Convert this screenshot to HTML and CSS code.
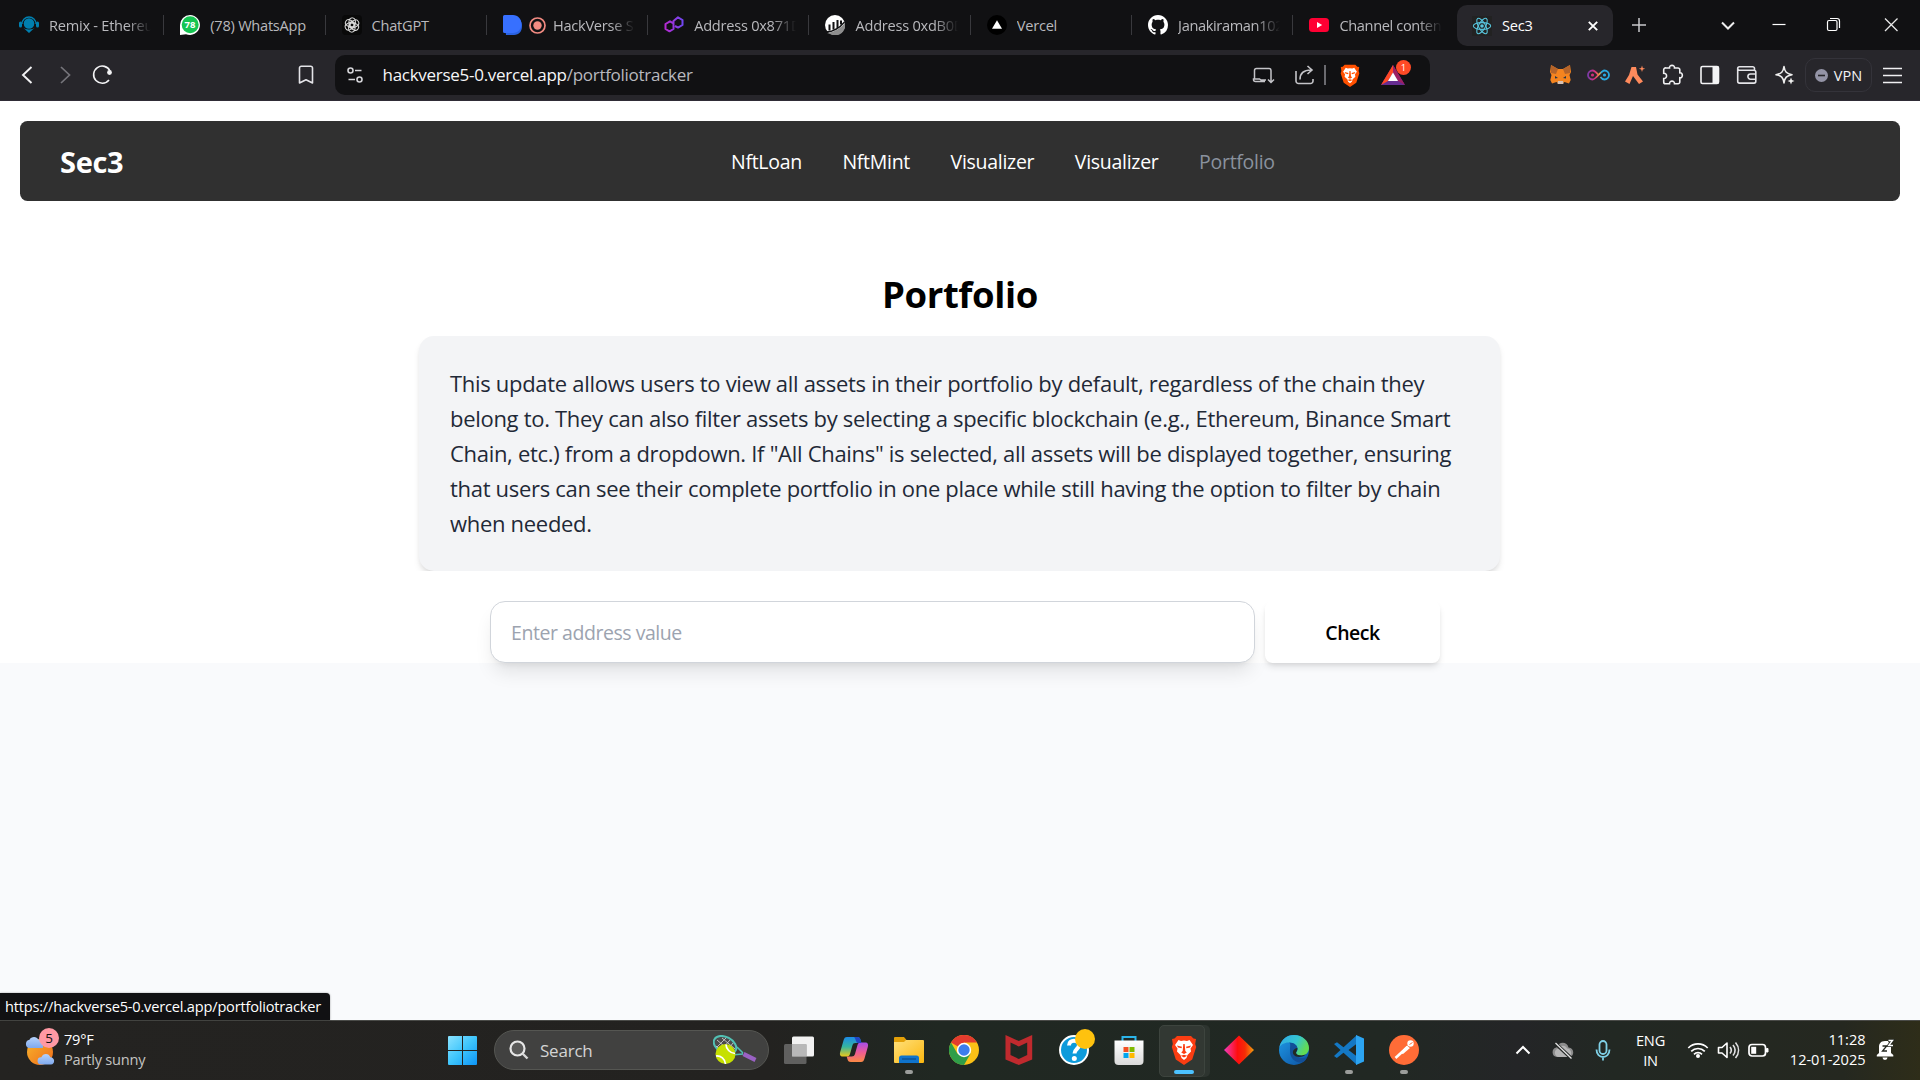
FILE: index.html
```html
<!DOCTYPE html>
<html lang="en">
<head>
<meta charset="utf-8">
<title>Sec3</title>
<link rel="stylesheet" href="styles.css">
</head>
<body>
<svg class="defs" width="0" height="0" aria-hidden="true">
  <defs>
    <symbol id="lion" viewBox="0 0 26 30">
      <path fill="currentColor" d="M6 1h14l2.500 2.500L25 4l-.8 5 1 3-4 12.500L13 30 4.800 24.500.8 12l1-3L1 4l2.500-.5z"/>
      <path fill="#fff" d="M7.500 5 10 6l3-.6L16 6l2.500-1 3.500 5-2.500 3.500.5 3-3.500 3.500-1 3-2.500 2-2.500-2-1-3L6 16.500l.5-3L4 10z"/>
      <path fill="currentColor" d="m6 10.500 5 1.200-.5 1.600-3.500-.8zm14 0-5 1.200.5 1.600 3.500-.8zM12.300 9h1.400l.6 7 1.500 1.500-2.800 1.600-2.800-1.600 1.500-1.500zM9.800 20.800 13 19.800l3.200 1-3.200 1.700z"/>
    </symbol>
    <linearGradient id="gSun" x1="0" y1="0" x2="1" y2="1"><stop offset="0" stop-color="#f7b52c"/><stop offset="1" stop-color="#ef6c1a"/></linearGradient>
    <linearGradient id="gCloud" x1="0" y1="0" x2="0" y2="1"><stop offset="0" stop-color="#b5d2fb"/><stop offset="1" stop-color="#7fa9ee"/></linearGradient>
    <linearGradient id="gWin" x1="0" y1="0" x2="1" y2="1"><stop offset="0" stop-color="#8be3ff"/><stop offset=".5" stop-color="#3ec5fc"/><stop offset="1" stop-color="#0d94f6"/></linearGradient>
    <linearGradient id="gFolder" x1="0" y1="0" x2="1" y2="1"><stop offset="0" stop-color="#ffe07a"/><stop offset="1" stop-color="#fbb70f"/></linearGradient>
    <linearGradient id="gCopA" x1="0" y1="0" x2="0" y2="1"><stop offset="0" stop-color="#1d8be8"/><stop offset=".5" stop-color="#35b5a0"/><stop offset="1" stop-color="#ecc819"/></linearGradient>
    <linearGradient id="gCopB" x1="0" y1="0" x2="0" y2="1"><stop offset="0" stop-color="#a64dea"/><stop offset=".5" stop-color="#ee5b96"/><stop offset="1" stop-color="#fb8a44"/></linearGradient>
    <linearGradient id="gDia" x1="0" y1="0" x2="1" y2="0"><stop offset="0" stop-color="#f03cc0"/><stop offset=".45" stop-color="#fe0e0e"/><stop offset=".7" stop-color="#f52c06"/><stop offset="1" stop-color="#f0a010"/></linearGradient>
    <linearGradient id="gEdgeA" x1="0" y1="0" x2="1" y2=".4"><stop offset="0" stop-color="#2fa8e8"/><stop offset=".6" stop-color="#35c6d0"/><stop offset="1" stop-color="#62dc54"/></linearGradient>
    <linearGradient id="gEdgeB" x1="0" y1="0" x2="1" y2="1"><stop offset="0" stop-color="#1f9be8"/><stop offset="1" stop-color="#0c4f9e"/></linearGradient>
    <linearGradient id="gStore" x1="0" y1="0" x2="0" y2="1"><stop offset="0" stop-color="#fff"/><stop offset="1" stop-color="#dadada"/></linearGradient>
    <linearGradient id="gInf" x1="0" y1="0" x2="1" y2="0"><stop offset="0" stop-color="#7b3aa8"/><stop offset=".35" stop-color="#e0307a"/><stop offset=".55" stop-color="#e8a040"/><stop offset=".65" stop-color="#29a9e1"/><stop offset="1" stop-color="#29a9e1"/></linearGradient>
    <linearGradient id="gPoly" x1="0" y1="0" x2="1" y2="0"><stop offset="0" stop-color="#b52ad0"/><stop offset="1" stop-color="#7146f0"/></linearGradient>
  </defs>
</svg>

<header class="tabstrip">
  <div class="tab">
    <svg class="fav" viewBox="0 0 20 20"><circle cx="10" cy="8.500" r="5.300" fill="#0080b0"/><path d="M3 9a7 7 0 0 1 14 0" fill="none" stroke="#0080b0" stroke-width="1.300"/><rect x="0" y="6.500" width="3" height="6" rx="1.500" fill="#0080b0"/><rect x="17" y="6.500" width="3" height="6" rx="1.500" fill="#0080b0"/><path d="M4 12.500c2 2.500 10 2.500 12 0L10 18z" fill="#0080b0"/></svg>
    <span class="tab-title faded">Remix - Ethereu</span>
  </div>
  <div class="tab">
    <svg class="fav" viewBox="0 0 20 20"><path d="M10 0a10 10 0 1 1-4 19.200L0 20V10A10 10 0 0 1 10 0z" fill="#fff"/><circle cx="10.200" cy="9.800" r="8.500" fill="#16c552"/><text x="10" y="13.300" text-anchor="middle" class="wa-count">78</text></svg>
    <span class="tab-title">(78) WhatsApp</span>
  </div>
  <div class="tab">
    <svg class="fav" viewBox="0 0 20 20"><rect width="20" height="20" rx="4" fill="#090909"/><g fill="none" stroke="#dcdcdc" stroke-width="1"><rect x="7" y="2.800" width="6.400" height="9.200" rx="3.200"/><rect x="7" y="2.800" width="6.400" height="9.200" rx="3.200" transform="rotate(60 10 10)"/><rect x="7" y="2.800" width="6.400" height="9.200" rx="3.200" transform="rotate(120 10 10)"/><rect x="7" y="2.800" width="6.400" height="9.200" rx="3.200" transform="rotate(180 10 10)"/><rect x="7" y="2.800" width="6.400" height="9.200" rx="3.200" transform="rotate(240 10 10)"/><rect x="7" y="2.800" width="6.400" height="9.200" rx="3.200" transform="rotate(300 10 10)"/></g></svg>
    <span class="tab-title">ChatGPT</span>
  </div>
  <div class="tab tab-rec">
    <svg class="fav" viewBox="0 0 20 20"><path d="M1 2h9c5.500 0 9 3.500 9 9s-3 9-8 9H3z" fill="#2a62e0"/><path d="M1.500 0H10c5 0 8.500 4 8.500 9s-3.500 9-8.500 9H1.500A1.500 1.500 0 0 1 0 16.500v-15A1.500 1.500 0 0 1 1.500 0z" fill="#3770ff"/></svg>
    <svg class="rec" viewBox="0 0 17 17"><circle cx="8.500" cy="8.500" r="7.500" fill="none" stroke="#f28b82" stroke-width="1.700"/><circle cx="8.500" cy="8.500" r="4.200" fill="#f28b82"/></svg>
    <span class="tab-title faded">HackVerse S</span>
  </div>
  <div class="tab">
    <svg class="fav" viewBox="0 0 20 20"><path d="M9.500 13.500V8.500L6 6.300 1.500 9v5L5.500 16.300 9.500 14V6L14 2.300 18.500 5v5L14 12.600 11 11" fill="none" stroke="url(#gPoly)" stroke-width="2" stroke-linejoin="round"/></svg>
    <span class="tab-title faded">Address 0x871D</span>
  </div>
  <div class="tab">
    <svg class="fav" viewBox="0 0 20 20"><circle cx="10" cy="10" r="10" fill="#fff"/><path d="M2 18c8-1 14-5 18-10v4a10 10 0 0 1-15 7z" fill="#8d8d8d"/><path d="M4.500 9.500v6M8.500 7v7.500M12.500 5v8M16 5.500v4" stroke="#111113" stroke-width="2"/><path d="M1.500 17C9 16.500 15 12.500 19.500 7" fill="none" stroke="#111113" stroke-width="1.300"/></svg>
    <span class="tab-title faded">Address 0xdB0D</span>
  </div>
  <div class="tab">
    <svg class="fav" viewBox="0 0 20 20"><circle cx="10" cy="10" r="10" fill="#000"/><path d="m10 5.200 5 8.600H5z" fill="#fff"/></svg>
    <span class="tab-title">Vercel</span>
  </div>
  <div class="tab">
    <svg class="fav" viewBox="0 0 16 16"><path fill="#fff" d="M8 0C3.580 0 0 3.580 0 8c0 3.540 2.290 6.530 5.470 7.590.4.070.55-.17.55-.38 0-.19-.01-.82-.01-1.490-2.010.37-2.530-.49-2.690-.94-.09-.23-.48-.94-.82-1.130-.28-.15-.68-.52-.01-.53.63-.01 1.080.58 1.230.82.72 1.210 1.870.87 2.330.66.070-.52.28-.87.51-1.070-1.780-.2-3.640-.89-3.640-3.950 0-.87.31-1.590.82-2.150-.08-.2-.36-1.020.08-2.120 0 0 .67-.21 2.200.82.64-.18 1.320-.27 2-.27s1.360.09 2 .27c1.530-1.040 2.200-.82 2.200-.82.44 1.100.16 1.920.08 2.120.51.56.82 1.270.82 2.150 0 3.070-1.870 3.750-3.650 3.950.29.25.54.73.54 1.480 0 1.070-.01 1.930-.01 2.200 0 .21.15.46.55.38A8.010 8.010 0 0 0 16 8c0-4.420-3.580-8-8-8z"/></svg>
    <span class="tab-title tight faded">Janakiraman102</span>
  </div>
  <div class="tab">
    <svg class="fav" viewBox="0 0 20 20"><rect y="3" width="20" height="14" rx="3.500" fill="#ff0033"/><path d="m8 7 5.200 3L8 13z" fill="#fff"/></svg>
    <span class="tab-title tight faded">Channel conten</span>
  </div>
  <div class="tab tab-active">
    <svg class="fav" viewBox="0 0 20 20"><rect width="20" height="20" fill="#222"/><g fill="none" stroke="#58c4dc" stroke-width="1.100"><ellipse cx="10" cy="10" rx="8.700" ry="3.400"/><ellipse cx="10" cy="10" rx="8.700" ry="3.400" transform="rotate(60 10 10)"/><ellipse cx="10" cy="10" rx="8.700" ry="3.400" transform="rotate(120 10 10)"/></g><circle cx="10" cy="10" r="1.800" fill="#58c4dc"/></svg>
    <span class="tab-title">Sec3</span>
    <svg class="tab-close" viewBox="0 0 10 10"><path d="m.8.8 8.400 8.400m0-8.400L.8 9.200" stroke="#fff" stroke-width="1.900"/></svg>
  </div>
  <svg class="new-tab" viewBox="0 0 14 14"><path d="M7 0v14M0 7h14" stroke="#c9c9cd" stroke-width="1.500"/></svg>
  <div class="win-controls">
    <svg viewBox="0 0 56 50"><path d="m22 22.500 6 6 6-6" fill="none" stroke="#eee" stroke-width="2"/></svg>
    <svg viewBox="0 0 56 50"><path d="M21.500 24.500h13" stroke="#fff" stroke-width="1.200"/></svg>
    <svg viewBox="0 0 56 50"><rect x="21.500" y="20.500" width="9.500" height="10" rx="1.500" fill="none" stroke="#fff" stroke-width="1.200"/><path d="M24 18.500h7a2.500 2.500 0 0 1 2.500 2.500v7" fill="none" stroke="#fff" stroke-width="1.200"/></svg>
    <svg viewBox="0 0 56 50"><path d="m22 18.500 12.500 12.500m0-12.500L22 31" stroke="#e8e8e8" stroke-width="1.300"/></svg>
  </div>
</header>

<div class="toolbar">
  <nav class="history">
    <svg viewBox="0 0 38 50"><path d="m23.500 17-8.500 8 8.500 8" fill="none" stroke="#f2f2f4" stroke-width="1.900"/></svg>
    <svg viewBox="0 0 38 50"><path d="m15 17 8.500 8-8.500 8" fill="none" stroke="#76757b" stroke-width="1.700"/></svg>
    <svg viewBox="0 0 38 50"><path d="M25 30a8.600 8.600 0 1 1 1-9" fill="none" stroke="#f2f2f4" stroke-width="1.600"/><circle cx="25.500" cy="22.500" r="2.400" fill="#f2f2f4"/></svg>
  </nav>
  <svg class="bookmark" viewBox="0 0 38 50"><path d="M12.500 33V18a1.800 1.800 0 0 1 1.800-1.800h9.400A1.800 1.800 0 0 1 25.500 18v15L19 29.800z" fill="none" stroke="#e4e4e8" stroke-width="1.600" stroke-linejoin="round"/></svg>
  <div class="omnibox">
    <svg class="tune" viewBox="0 0 40 40"><g fill="none" stroke="#d4d4d8" stroke-width="1.600"><circle cx="15.500" cy="15.500" r="2.500"/><circle cx="24.500" cy="24.500" r="2.500"/><path d="M20 15.500h6.500M13.500 24.500H20"/></g></svg>
    <div class="url"><b>hackverse5-0.vercel.app</b>/portfoliotracker</div>
    <svg class="install" viewBox="0 0 40 40"><path d="M21 26.500H11.500a2 2 0 0 1-2-2V24h6l1.500 1h5M10.500 24V15.500a2 2 0 0 1 2-2h12.500a2 2 0 0 1 2 2V21M27 20v7M24 24.500l3 3 3-3" fill="none" stroke="#c4c4c8" stroke-width="1.500"/></svg>
    <svg class="share" viewBox="0 0 40 40"><path d="M12 16v10a2.500 2.500 0 0 0 2.500 2.500h12A2.500 2.500 0 0 0 29 26v-2M16 24.500c0-6 3.500-9.500 11-9.500M23.500 11l4.500 4-4.500 4" fill="none" stroke="#c4c4c8" stroke-width="1.600"/></svg>
    <span class="omni-sep"></span>
    <svg class="shield"><use href="#lion"/></svg>
    <div class="bat">
      <svg viewBox="0 0 24 20"><path d="M12 0 0 20h24z" fill="#662d91"/><path d="M12 0 0 20l7-4L12 7.500z" fill="#ff4724"/><path d="m12 0 12 20-7-4-5-8.500z" fill="#9e1f63"/><path d="m12 7.500 5 8.500H7z" fill="#fff"/></svg>
      <span class="bat-badge">1</span>
    </div>
  </div>
  <div class="extensions">
    <svg viewBox="0 0 37 50"><path d="m9 15 7 4h5l7-4 1 7-1.500 3 1.200 5-1.700 3.500-4.500-1.500-2 1.500h-4l-2-1.500L10 33.500 8.300 30l1.200-5L8 22z" fill="#f5841f"/><path d="m9 15 7 4-2 5-5-1zm19 0-7 4 2 5 5-1z" fill="#b5642a"/><path d="m13 26 3 2-3 .5zm11 0-3 2 3 .5z" fill="#233447"/><path d="M16 31h5l.5 3h-6z" fill="#d7c1b3"/></svg>
    <svg viewBox="0 0 37 50"><path d="M19.500 25c-3-3.500-4-4.500-6-4.500a4.500 4.500 0 0 0 0 9c3.500 0 8.500-9 12-9a4.500 4.500 0 0 1 0 9c-1.500 0-3-1-4-2.500" fill="none" stroke="url(#gInf)" stroke-width="1.800"/><circle cx="13.500" cy="25" r="1.600" fill="#d0307a"/><circle cx="25.500" cy="25" r="1.600" fill="#29a9e1"/></svg>
    <svg viewBox="0 0 37 50"><path d="M15.500 17h4.500l1.500 7.500 5.500 7-4 2.500-6-8-3.500 8-4.500-2.500L13 25z" fill="#ff8a5c"/><path d="m26 15.500.8 2.400 2.400.8-2.400.8-.8 2.400-.8-2.400-2.400-.8 2.400-.8z" fill="#ff8a5c"/></svg>
    <svg viewBox="0 0 37 50"><path d="M12 18h3.500c-.5-3.500 5.500-3.500 5 0H24a1.800 1.800 0 0 1 1.800 1.800v3c3.400-.6 3.400 5.600 0 5V32a1.800 1.800 0 0 1-1.800 1.800h-3.500c.2-3.600-5.200-3.600-5 0H11.500A1.800 1.800 0 0 1 9.700 32v-3.500c3.800.2 3.800-5.400 0-5.200v-3.500A1.800 1.800 0 0 1 12 18z" fill="none" stroke="#f0f0f2" stroke-width="1.600"/></svg>
    <svg viewBox="0 0 37 50"><rect x="10" y="16.500" width="17.500" height="17" rx="1.500" fill="none" stroke="#f4f4f6" stroke-width="1.600"/><path d="M21.500 16.500h6v17h-6z" fill="#f4f4f6"/></svg>
    <svg viewBox="0 0 37 50"><g fill="none" stroke="#e4e4e8" stroke-width="1.600"><path d="M26.500 20v-1.500a1.800 1.800 0 0 0-1.800-1.800H11.500a1.800 1.800 0 0 0 0 3.600H26a1.800 1.800 0 0 1 1.800 1.800v9.200a1.800 1.800 0 0 1-1.800 1.800H11.500a1.800 1.800 0 0 1-1.800-1.800V18.500"/><path d="M28 24h-5.500a2.600 2.600 0 0 0 0 5.200H28"/></g></svg>
    <svg viewBox="0 0 37 50"><path d="M18 16.500c.8 5.500 2.500 7.200 8 8.200-5.500 1-7.200 2.700-8 8.200-.8-5.500-2.500-7.200-8-8.200 5.500-1 7.200-2.700 8-8.200z" fill="none" stroke="#eee" stroke-width="1.600" stroke-linejoin="round"/><path d="m25 27.500 1 2.500 2.500 1-2.500 1-1 2.500-1-2.500-2.500-1 2.500-1z" fill="#eee"/></svg>
  </div>
  <div class="vpn"><svg viewBox="0 0 13 13"><circle cx="6.500" cy="6.500" r="6.500" fill="#9494a6"/><path d="M3 6.500h7" stroke="#27262b" stroke-width="1.600"/></svg><span>VPN</span></div>
  <svg class="menu" viewBox="0 0 40 50"><path d="M11 18.500h19M11 25.500h19M11 32.500h19" stroke="#f0f0f2" stroke-width="1.500"/></svg>
</div>

<main class="page">
  <nav class="navbar">
    <div class="brand">Sec3</div>
    <ul class="links">
      <li>NftLoan</li><li>NftMint</li><li>Visualizer</li><li>Visualizer</li><li class="current">Portfolio</li>
    </ul>
  </nav>
  <section class="intro">
    <h1>Portfolio</h1>
    <p class="card">This update allows users to view all assets in their portfolio by default, regardless of the chain they<br>belong to. They can also filter assets by selecting a specific blockchain (e.g., Ethereum, Binance Smart<br>Chain, etc.) from a dropdown. If "All Chains" is selected, all assets will be displayed together, ensuring<br>that users can see their complete portfolio in one place while still having the option to filter by chain<br>when needed.</p>
  </section>
  <form class="lookup">
    <input class="address" type="text" placeholder="Enter address value">
    <button class="check" type="button">Check</button>
  </form>
  <div class="status">https://hackverse5-0.vercel.app/portfoliotracker</div>
</main>

<footer class="taskbar">
  <div class="weather">
    <div class="weather-icon">
      <svg viewBox="0 0 34 36"><circle cx="15" cy="21" r="13" fill="url(#gSun)"/><path d="M4 17a4.200 4.200 0 0 1 .5-8.200C6 5 12 5 13.200 8.500c4 0 5 2.500 4.800 8.500z" fill="url(#gCloud)"/><path d="M16 33.500a3.600 3.600 0 0 1 .3-7.200c1.500-4.500 8-4.500 9 0 5 0 5 7.200.7 7.200z" fill="url(#gCloud)"/></svg>
      <span class="weather-badge">5</span>
    </div>
    <div class="weather-text"><div>79°F</div><div class="dim">Partly sunny</div></div>
  </div>
  <svg class="start" viewBox="0 0 29 29"><path d="M0 1a1 1 0 0 1 1-1h13v14H0zM15 0h13a1 1 0 0 1 1 1v13H15zM0 15h14v14H1a1 1 0 0 1-1-1zM15 15h14v13a1 1 0 0 1-1 1H15z" fill="url(#gWin)"/></svg>
  <div class="search">
    <svg class="glass" viewBox="0 0 20 20"><circle cx="8.500" cy="8.500" r="7" fill="#ffffff22" stroke="#e6e6e6" stroke-width="2.200"/><path d="m13.500 13.500 5 5" stroke="#d8d8d8" stroke-width="2.400"/></svg>
    <span>Search</span>
    <svg class="racket" viewBox="0 0 44 30"><g fill="none"><ellipse cx="12" cy="10" rx="12" ry="8" transform="rotate(28 12 10)" fill="#4b4b4b" stroke="#52c1b4" stroke-width="2"/><path d="m4 5 14 12M9 3l13 11M3 11l8 7M4 12l9-9M8 15l9-10M13 17l7-9" stroke="#d8d8d8" stroke-width=".8"/><path d="m18 20 12-1M24 12l6 6" stroke="#52c1b4" stroke-width="1.500"/><path d="m30.500 19 12 6" stroke="#9a62c4" stroke-width="4.200"/></g><circle cx="12.500" cy="19" r="10" fill="#c6e000"/><path d="M3 21c5-.5 9 3 9.500 8M13 9.500c0 4 4 9 9 9" fill="none" stroke="#fff" stroke-width="1.700"/></svg>
  </div>
  <div class="apps">
    <div class="app"><svg viewBox="0 0 30 30"><rect x="8" y="1.500" width="22" height="20" rx="1.500" fill="#f2f2f2"/><rect x="0" y="9" width="22.500" height="20" rx="1.500" fill="#777b"/><path d="M8 9h14.500v12.500H8z" fill="#b8b8b8"/></svg></div>
    <div class="app"><svg viewBox="0 0 30 30"><path d="M8 2h10c2.500 0 3 1 3.600 3l.8 3h-6c-1.800 0-2.500.8-3 2.500L11 19c-.6 2-1.500 2.500-3.500 2.500H4c-3 0-3.500-2-2.800-4.500L4.500 5.500C5.200 3 6 2 8 2z" fill="url(#gCopA)"/><path d="M22 27H12c-2.500 0-3-1-3.600-3l-.7-2.500h5c1.800 0 2.800-.8 3.300-2.500L18.500 10c.6-2 1.800-2.500 3.500-2.500h4c3 0 3.500 2 2.800 4.500L25.500 23.500C24.800 26 24 27 22 27z" fill="url(#gCopB)"/><path d="M17 2c3 0 4 .5 4.600 3l.9 3h-3.700C17 8 16.500 3 15 2z" fill="#2146c4"/></svg></div>
    <div class="app running"><svg viewBox="0 0 30 30"><path d="M0 3a1 1 0 0 1 1-1h9l2.500 3-2 3H0z" fill="#e3a008"/><path d="M0 7h10l2-2h17a1 1 0 0 1 1 1v21a1 1 0 0 1-1 1H1a1 1 0 0 1-1-1z" fill="url(#gFolder)"/><path d="M5 28v-5a2.500 2.500 0 0 1 2.500-2.500h15A2.500 2.500 0 0 1 25 23v5z" fill="#0f74cc"/><path d="M8 24h14" stroke="#0a4b8c" stroke-width="1.200"/></svg></div>
    <div class="app"><svg viewBox="0 0 30 30"><circle cx="15" cy="15" r="15" fill="#fbc116"/><path d="M15 15 2 7.500A15 15 0 0 1 28 7.500H15z" fill="#e33b2e"/><path d="M2 7.500A15 15 0 0 0 15 30l6.500-11.200L15 15l-6.500 3.800z" fill="#2f9e49"/><circle cx="15" cy="15" r="7.200" fill="#fff"/><circle cx="15" cy="15" r="5.700" fill="#3b7ded"/></svg></div>
    <div class="app"><svg viewBox="0 0 30 30"><path d="m1.500 0 13.300 6L28.200 0v24.500L14.800 30 1.500 24.500zM6.500 7.500V20l8.300 4 8.400-4V7.500l-8.400 4z" fill="#c02a2e"/></svg></div>
    <div class="app"><svg class="help" viewBox="0 0 36 36"><circle cx="15" cy="21" r="14" fill="#0d9bdb" stroke="#fff" stroke-width="2"/><path d="M10 16.500c0-6.500 10-6 10-.5 0 4-4.500 4-4.500 8.500" fill="none" stroke="#fff" stroke-width="4"/><circle cx="15.300" cy="29.500" r="2.500" fill="#fff"/><circle cx="26" cy="10" r="10" fill="#ffc20e"/></svg></div>
    <div class="app"><svg viewBox="0 0 30 30"><path d="M8.500 7V2h13v5" fill="none" stroke="#2bb5ea" stroke-width="2"/><path d="M.5 5.500h29V26a4 4 0 0 1-4 4h-21a4 4 0 0 1-4-4z" fill="url(#gStore)"/><path d="M9.500 12h5v5h-5z" fill="#f25022"/><path d="M15.500 12h5v5h-5z" fill="#7fba00"/><path d="M9.500 18h5v5h-5z" fill="#00a4ef"/><path d="M15.500 18h5v5h-5z" fill="#ffb900"/></svg></div>
    <div class="app focused"><svg class="brave"><use href="#lion"/></svg></div>
    <div class="app"><svg viewBox="0 0 30 30"><path d="m15 .5 15 14.500-15 14.500L0 15z" fill="url(#gDia)"/></svg></div>
    <div class="app"><svg viewBox="0 0 30 30"><circle cx="15" cy="15" r="15" fill="url(#gEdgeB)"/><path d="M.3 12.500C2 4.500 8 0 15 0c8.500 0 15 6 15 13 0 5-4 7.500-7.500 7.500s-5.500-1.500-5.500-2.500 1.500-1.500 1.500-4c0-3-3.500-6.500-9-6.500-4.500 0-8 2.500-9.200 5z" fill="url(#gEdgeA)"/><path d="M18.500 13.500c0-3-3-6-8.500-6 2 1 1 3 1 8.500 0 8 6 13 13.500 11a14 14 0 0 0 4-5.500c-6 3.500-11.500.5-11.500-3.500 0-1 1.500-2 1.500-4.500z" fill="#124f98"/><path d="M18.300 13c.2 3-1.300 3.500-1.300 4.800 0 1.500 2 2.700 5.500 2.700 1.500 0 3-.4 4.500-1.400-2 3-9 4.400-12 1-2.500-3-.5-6.600 3.300-7.100z" fill="#222823"/></svg></div>
    <div class="app running"><svg viewBox="0 0 30 30"><path d="M23 0 9.500 12.300 3 7.300.5 8.800 0 9l6.500 6L0 21l2.800 2L9.500 17.700 23 30V21.500L14.500 15 23 8.500z" fill="#1478c4"/><path d="m22 0 8 3.500v23L22 30z" fill="#2ca5f2"/></svg></div>
    <div class="app running"><svg viewBox="0 0 30 30"><circle cx="15" cy="15" r="15" fill="#ff6c37"/><path d="M6.500 23 19 11.500" stroke="#fff" stroke-width="2.600"/><path d="m11 18 6.500-7 3.500 2-7 6z" fill="#fff"/><circle cx="21.500" cy="8.500" r="3.200" fill="#fff"/><path d="m20.500 9.500 3-2" stroke="#ff6c37" stroke-width="1"/></svg></div>
  </div>
  <div class="tray">
    <svg viewBox="0 0 40 60"><path d="m16.500 33.500 6.500-6.500 6.500 6.500" fill="none" stroke="#fff" stroke-width="2"/></svg>
    <svg viewBox="0 0 40 60"><path d="M17 37a4.800 4.800 0 0 1-.5-9.500c2-6.500 11-6 12 0 6 0 6.500 9.500.5 9.500z" fill="#8d8d8d"/><path d="M19 37c-5 0-6-8 0-8.500 2-4 7-3 8 0 5 0 6 8.500 1 8.500z" fill="#b5b5b5"/><path d="m15.500 23.500 15.500 14.500" stroke="#232725" stroke-width="3.500"/><path d="m15.500 23 16 15.500" stroke="#e6e6e6" stroke-width="1.300"/></svg>
    <svg viewBox="0 0 40 60"><g fill="none" stroke="#7fd0e6" stroke-width="1.800"><rect x="19.500" y="21" width="7" height="13" rx="3.500"/><path d="M16.500 29.500c0 10 13 10 13 0M23 37v3.500"/></g></svg>
    <div class="lang"><div>ENG</div><div>IN</div></div>
    <svg class="net" viewBox="0 0 30 60"><g fill="none" stroke="#fff" stroke-width="1.700"><path d="M5.300 28a13.700 13.700 0 0 1 19.400 0M8.200 31.300a9.600 9.600 0 0 1 13.600 0M11 34.300a5.700 5.700 0 0 1 8 0"/></g><circle cx="15" cy="36" r="2" fill="#fff"/></svg>
    <svg class="net" viewBox="0 0 30 60"><g fill="none" stroke="#fff" stroke-width="1.600" stroke-linejoin="round"><path d="M5.500 27.500h3.500l5-4.500v14.500l-5-4.500H5.500z"/><path d="M17 27c1.600 2 1.600 4.500 0 6.500M20 25c2.700 3.300 2.700 7.200 0 10.500M22.500 22.500c4 4.700 4 10.700 0 15.500" stroke="#e2e2e2"/></g></svg>
    <svg class="net" viewBox="0 0 30 60"><rect x="6" y="24.500" width="16.500" height="11.500" rx="3" fill="none" stroke="#fff" stroke-width="1.700"/><path d="M8.200 26.800h5v7h-5z" fill="#fff"/><path d="M23.500 28.500h1.500v3.500h-1.500z" fill="#fff" stroke="#fff"/></svg>
    <div class="clock"><div>11:28</div><div>12-01-2025</div></div>
    <svg class="bell" viewBox="0 0 20 22"><path d="M9 2C4.500 2 3 5 3 8v6L.8 16v1.500h16.500V16L15 14V8l-3-6z" fill="#fff"/><path d="M6.500 18.500h5a2.500 2.500 0 0 1-5 0z" fill="#fff"/><path d="M6.500 7h4.200l-4.200 5h4.500" fill="none" stroke="#252820" stroke-width="1.300"/><path d="M12.500 1.500h4L12.700 6.500h4.300" fill="none" stroke="#252820" stroke-width="3"/><path d="M12.500 1.500h4L12.700 6.500h4.300" fill="none" stroke="#fff" stroke-width="1.400"/></svg>
  </div>
</footer>
</body>
</html>
```
FILE: styles.css
```css
* { box-sizing: border-box; }
body {
  margin: 0;
  height: 1080px;
  overflow: hidden;
  display: flex;
  flex-direction: column;
  background: #f9fafc;
  font-family: "Open Sans", "Noto Sans", sans-serif;
}
svg { display: block; flex: none; }
.defs { position: absolute; }

/* Tab strip */
.tabstrip {
  height: 50px;
  flex: none;
  display: flex;
  align-items: center;
  padding-left: 3px;
  background: #111113;
  color: #b9b9bd;
}
.tab {
  width: 161.3px;
  height: 20px;
  flex: none;
  display: flex;
  align-items: center;
  gap: 10px;
  padding: 0 10px 0 16px;
  border-right: 1px solid #39393d;
}
.tab:nth-child(9) { border-color: transparent; }
.tab-rec { gap: 6.500px; }
.rec { width: 17px; height: 17px; }
.fav { width: 20px; height: 20px; }
.wa-count { font: 700 9.5px "Open Sans", sans-serif; fill: #fff; }
.tab-title {
  flex: 1;
  min-width: 0;
  height: 22px;
  line-height: 22px;
  margin-top: -1px;
  overflow: hidden;
  white-space: nowrap;
  font-size: 14.6px;
  letter-spacing: -0.25px;
}
.tight { letter-spacing: -0.36px; }
.faded {
  -webkit-mask-image: linear-gradient(90deg, #000 calc(100% - 26px), transparent calc(100% - 2px));
  mask-image: linear-gradient(90deg, #000 calc(100% - 26px), transparent calc(100% - 2px));
}
.tab-active {
  width: 156px;
  height: 41px;
  margin: 1px 0 0 2.300px;
  padding: 0 15px;
  border: 0;
  border-radius: 10px;
  background: #27262b;
  color: #fff;
}
.tab-close { width: 10px; height: 10px; }
.new-tab { width: 14px; height: 14px; margin-left: 19px; }
.win-controls { display: flex; margin: 0 1px 0 auto; }
.win-controls svg { width: 56px; height: 50px; }
.win-controls svg:first-child { margin-right: -5px; }
.win-controls svg:nth-child(3) { margin: 0 1.500px 0 -1.500px; }

/* Toolbar */
.toolbar {
  height: 51px;
  flex: none;
  display: flex;
  align-items: center;
  padding-left: 8px;
  background: #27262b;
  border-bottom: 1px solid #2f2c36;
}
.history { display: flex; width: 279px; }
.history svg, .bookmark { width: 38px; height: 50px; }
.omnibox {
  width: 1095px;
  height: 40px;
  margin-left: 10px;
  flex: none;
  display: flex;
  align-items: center;
  border-radius: 10px;
  background: #111113;
}
.tune { width: 40px; height: 40px; }
.url {
  flex: 1;
  margin-top: -2px;
  padding-left: 7.500px;
  color: #b9b9bf;
  font-size: 17px;
  letter-spacing: -0.28px;
}
.url b { font-weight: 400; color: #f6f6f8; }
.install, .share { width: 40px; height: 40px; }
.omni-sep { width: 2px; height: 20px; margin-right: 14px; background: #6b6b70; }
.shield { width: 20px; height: 23px; color: #ff5000; }
.bat { position: relative; width: 70px; padding-left: 21px; }
.bat svg { width: 24px; height: 20px; }
.bat-badge {
  position: absolute;
  left: 36px;
  top: -5px;
  width: 15px;
  height: 15px;
  border-radius: 50%;
  background: #ff4a26;
  color: #fff;
  font-size: 9.5px;
  line-height: 15px;
  text-align: center;
}
.extensions { display: flex; gap: 0.4px; margin-left: 111.500px; }
.extensions svg { width: 37px; height: 50px; }
.vpn {
  width: 67px;
  height: 34px;
  margin-left: 2px;
  flex: none;
  display: flex;
  align-items: center;
  gap: 6px;
  padding-left: 9px;
  border: 1px solid #34333a;
  border-radius: 10px;
  color: #f4f4f6;
  font-size: 14.5px;
}
.vpn svg { width: 13px; height: 13px; }
.menu { width: 40px; height: 50px; }

/* Page */
.page {
  position: relative;
  flex: 1;
  display: flex;
  flex-direction: column;
  align-items: center;
}
.navbar {
  align-self: stretch;
  height: 120px;
  flex: none;
  padding: 20px 20px 0;
  background: #fff;
  display: grid;
}
.brand, .links { grid-area: 1 / 1; height: 80px; }
.brand {
  display: flex;
  align-items: center;
  padding-left: 40px;
  border-radius: 7.5px;
  background: #303030;
  color: #fff;
  font-size: 29px;
  font-weight: 700;
  letter-spacing: -0.3px;
}
.links {
  display: flex;
  align-items: center;
  gap: 40.500px;
  margin: 0;
  padding: 0 0 0 711px;
  list-style: none;
  color: #fff;
  font-size: 19.500px;
  letter-spacing: -0.28px;
}
.links .current { color: #8a929e; }
.intro {
  align-self: stretch;
  height: 350px;
  flex: none;
  overflow: hidden;
  display: flex;
  flex-direction: column;
  align-items: center;
  background: #fff;
}
h1 {
  margin: 49px 0 17px;
  line-height: 49px;
  font-size: 36.500px;
  font-weight: 700;
  letter-spacing: -0.4px;
  color: #000;
}
.card {
  width: 1081px;
  height: 235px;
  margin: 0 1px 0 0;
  padding: 30px 31px;
  border-radius: 15px;
  background: #f3f4f6;
  box-shadow: 0 5px 7.500px -1px #0000001a, 0 2.500px 5px -2.500px #0000001a;
  color: #1f2937;
  font-size: 22px;
  line-height: 35px;
  letter-spacing: -0.3px;
  white-space: nowrap;
}
.lookup {
  align-self: stretch;
  height: 92px;
  flex: none;
  display: flex;
  gap: 10px;
  padding: 30px 480px 0 490px;
  background: #fff;
}
.address, .check {
  height: 62px;
  font-family: inherit;
  font-size: 19.5px;
  outline: 0;
}
.address {
  width: 765px;
  padding: 1px 20px 0;
  border: 1px solid #d1d5db;
  border-radius: 15px;
  background: #fff;
  box-shadow: 0 12.500px 19px -4px #0000001a, 0 5px 7.500px -5px #0000001a;
  letter-spacing: -0.45px;
}
.address::placeholder { color: #9ca3af; opacity: 1; }
.check {
  width: 175px;
  padding: 1px 0 0;
  border: 0;
  border-radius: 7.500px;
  background: #fff;
  box-shadow: 0 5px 7.500px -1px #0000001a, 0 2.500px 5px -2.500px #0000001a;
  color: #000;
  font-weight: 600;
  letter-spacing: -0.5px;
}
.status {
  position: absolute;
  left: 0;
  bottom: 0;
  width: 330px;
  height: 27px;
  padding-left: 5px;
  border-top-right-radius: 4px;
  background: #111113;
  box-shadow: 0 0 2px #0006;
  color: #fff;
  font-size: 14.600px;
  line-height: 27px;
  letter-spacing: -0.2px;
  white-space: nowrap;
}

/* Taskbar */
.taskbar {
  height: 60px;
  flex: none;
  display: flex;
  align-items: center;
  border-top: 1px solid #4a4b48;
  background: linear-gradient(90deg, #242321 0, #232220 40%, #202822 49%, #212823 72%, #242527 79%, #222823 84%, #252820 96%, #2e2d19 100%);
  color: #fff;
  font-size: 14.6px;
  letter-spacing: -0.22px;
}
.weather { display: flex; width: 448px; padding-left: 25px; gap: 5px; margin-top: -2px; }
.weather-icon { position: relative; width: 34px; }
.weather-icon svg { width: 34px; height: 36px; }
.weather-badge {
  position: absolute;
  left: 14px;
  top: -3px;
  width: 20px;
  height: 20px;
  border-radius: 50%;
  background: #ff99a4;
  color: #111;
  font-size: 13.500px;
  line-height: 20px;
  text-align: center;
}
.weather-text { line-height: 20px; white-space: nowrap; margin-top: -2px; }
.dim { color: #c4c4c2; }
.start { width: 29px; height: 29px; }
.search {
  width: 275px;
  height: 40px;
  margin: -1px 0 0 17px;
  flex: none;
  display: flex;
  align-items: center;
  padding: 0 11px 0 14px;
  border: 1px solid #555652;
  border-radius: 20px;
  background: #414140;
  color: #d4d4d4;
  font-size: 17px;
}
.glass { width: 20px; height: 20px; margin-right: 11px; }
.racket { width: 44px; height: 30px; margin-left: auto; }
.apps { display: flex; margin-left: 2.500px; margin-top: -1px; }
.app {
  position: relative;
  width: 55px;
  height: 60px;
  display: flex;
  align-items: center;
  justify-content: center;
}
.app svg { position: relative; width: 30px; height: 30px; }
.app .help { width: 36px; height: 36px; margin: -6px 0 0 6px; }
.app .brave { width: 26px; height: 30px; color: #fb3d12; }
.running::after, .focused::after {
  content: "";
  position: absolute;
  bottom: 6px;
  width: 8px;
  height: 4px;
  border-radius: 2px;
  background: #9b9d9b;
}
.focused::after { width: 20px; background: #4cc2ff; }
.focused::before {
  content: "";
  position: absolute;
  left: 2.500px;
  top: 5px;
  width: 44px;
  height: 50px;
  border: 1px solid #3d443e;
  border-radius: 5px;
  background: #323833;
  box-shadow: 5px 0 0 #2d342f;
}
.tray { display: flex; align-items: center; margin: -1px 0 0 68.500px; }
.tray svg { width: 40px; height: 60px; }
.lang { width: 60px; margin: -1px 2px 0 0.5px; line-height: 20px; text-align: center; }
.tray .net { width: 30px; }
.clock { width: 93px; line-height: 20px; text-align: right; letter-spacing: -0.05px; margin-top: -2px; }
.tray .bell { width: 20px; height: 22px; margin-left: 10px; }
```
